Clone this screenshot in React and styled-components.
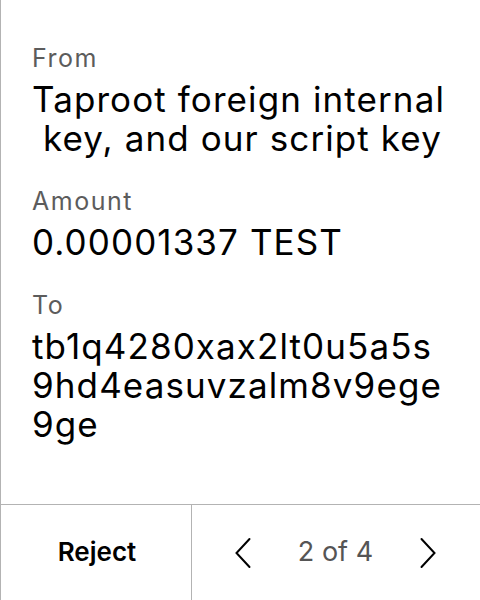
import styled, { createGlobalStyle } from "styled-components";

const GlobalStyle = createGlobalStyle`
    html, body {
        margin: 0;
        padding: 0;
        background: #fff;
    }
    body {
        font-family: Inter, "Noto Sans", sans-serif;
        color: #000;
    }
`;

const Screen = styled.div`
    width: 480px;
    height: 600px;
    box-sizing: border-box;
    border-left: 1px solid #b3b3b3;
    display: flex;
    flex-direction: column;
    overflow: hidden;
`;

const Body = styled.div`
    flex: 1;
    padding: 45px 35px 0 31px;
    display: flex;
    flex-direction: column;
    gap: 30px;
`;

const Field = styled.div`
    display: flex;
    flex-direction: column;
    gap: 9px;
`;

const Label = styled.div`
    font-size: 25px;
    line-height: 26px;
    letter-spacing: 1.5px;
    color: #5c5c5c;
`;

const Value = styled.div`
    font-size: 35px;
    line-height: 39px;
    letter-spacing: 1.1px;
    white-space: ${(p) => (p.$keepLines ? "pre" : "normal")};
    word-break: break-all;
`;

const Footer = styled.div`
    height: 96px;
    border-top: 1px solid #b3b3b3;
    display: grid;
    grid-template-columns: 191px 1fr;
    box-sizing: border-box;
`;

const RejectButton = styled.button`
    border: none;
    border-right: 1px solid #b3b3b3;
    background: none;
    font-family: inherit;
    font-size: 26px;
    font-weight: 600;
    color: #000;
    padding: 0 0 2px 2px;
`;

const Pager = styled.div`
    display: flex;
    align-items: center;
    justify-content: space-between;
    padding: 0 40px 0 39px;
`;

const Arrow = styled.button`
    border: none;
    background: none;
    padding: 0;
    width: 24px;
    height: 32px;
    display: flex;
    align-items: center;
    justify-content: center;
`;

const PageText = styled.span`
    font-size: 27px;
    color: #555;
    padding-bottom: 2px;
`;

function Chevron({ dir }) {
    const d = dir === "left" ? "M15.5 2 L2.5 16 L15.5 30" : "M2.5 2 L15.5 16 L2.5 30";
    return (
        <svg width="18" height="32" viewBox="0 0 18 32" fill="none">
            <path d={d} stroke="#000" strokeWidth="2" strokeLinecap="round" strokeLinejoin="miter" />
        </svg>
    );
}

const fields = [
    { label: "From", value: "Taproot foreign internal\n key, and our script key", keepLines: true },
    { label: "Amount", value: "0.00001337 TEST" },
    { label: "To", value: "tb1q4280xax2lt0u5a5s9hd4easuvzalm8v9ege9ge" },
];

export default function App() {
    return (
        <>
            <GlobalStyle />
            <Screen>
                <Body>
                    {fields.map((f) => (
                        <Field key={f.label}>
                            <Label>{f.label}</Label>
                            <Value $keepLines={f.keepLines}>{f.value}</Value>
                        </Field>
                    ))}
                </Body>
                <Footer>
                    <RejectButton>Reject</RejectButton>
                    <Pager>
                        <Arrow><Chevron dir="left" /></Arrow>
                        <PageText>2 of 4</PageText>
                        <Arrow><Chevron dir="right" /></Arrow>
                    </Pager>
                </Footer>
            </Screen>
        </>
    );
}
